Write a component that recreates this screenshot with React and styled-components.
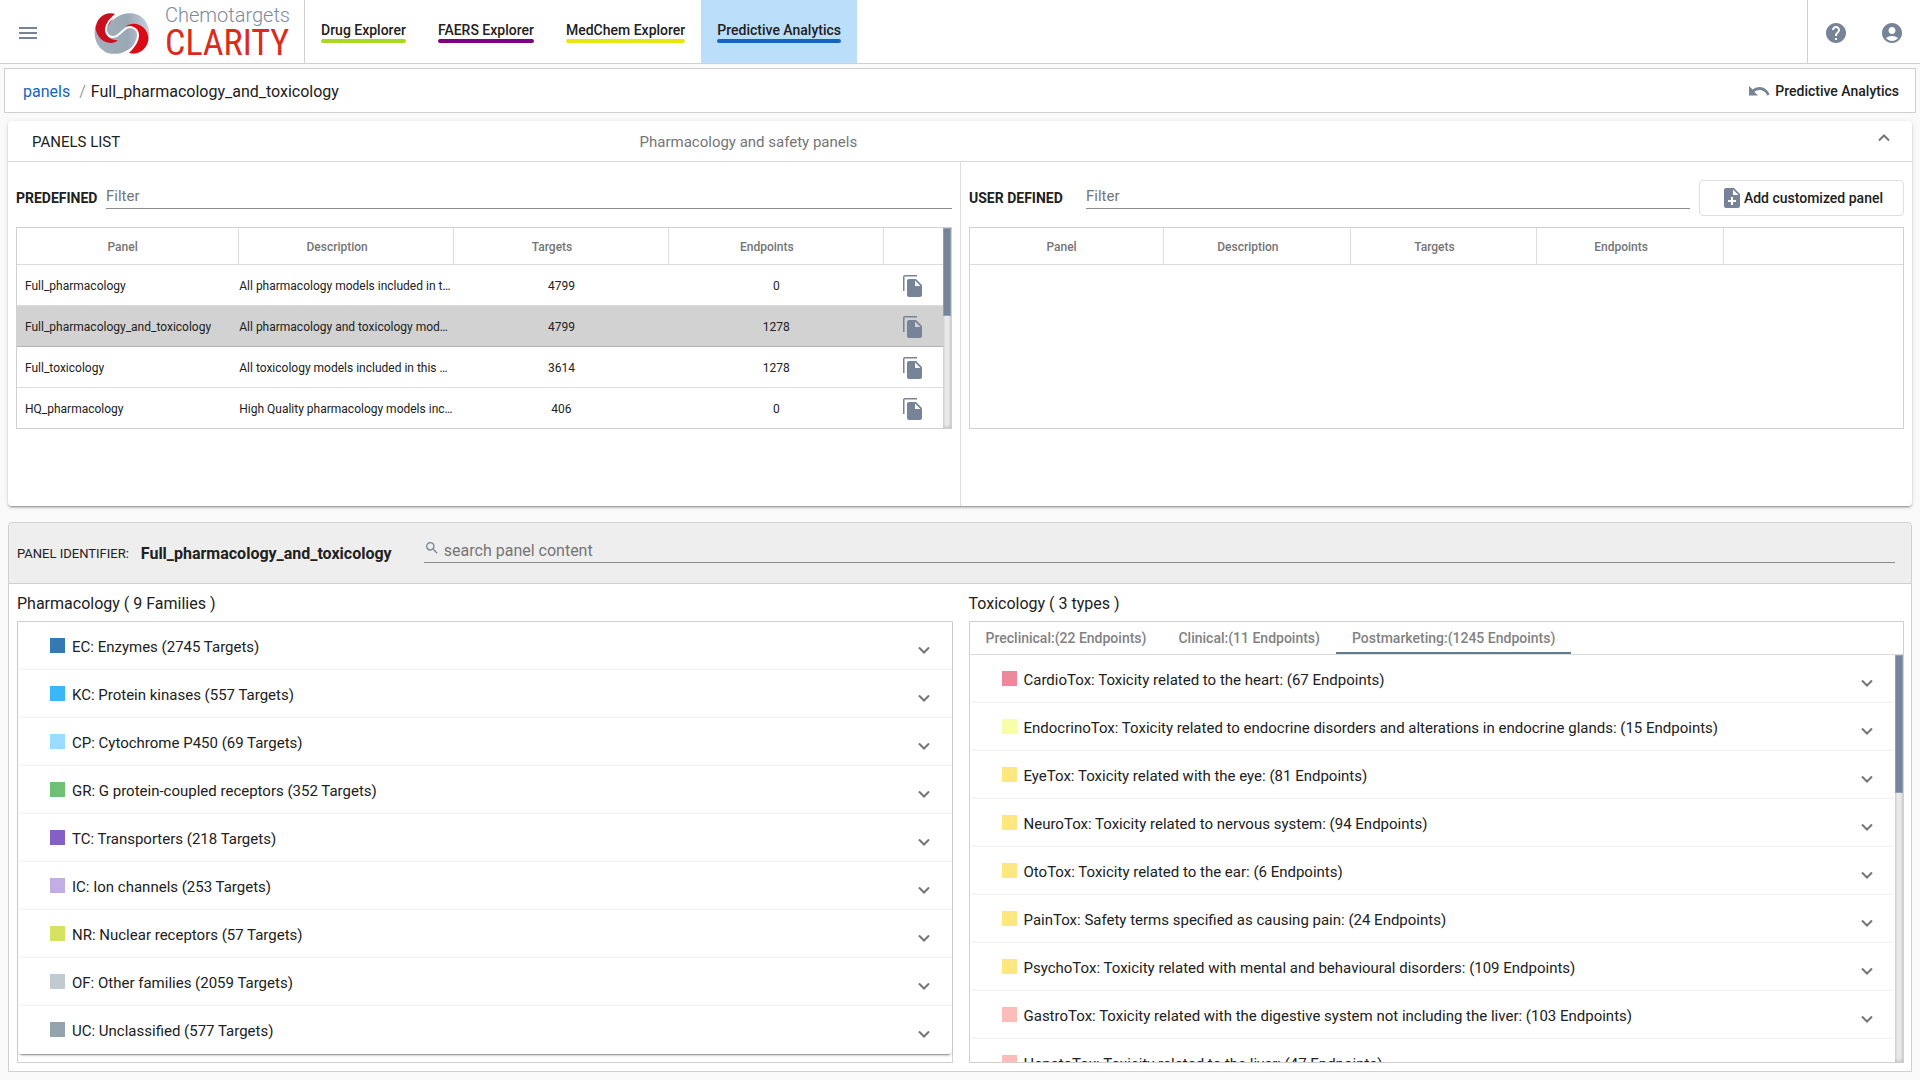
import React, { useState } from 'react';
import styled, { createGlobalStyle, ThemeProvider } from 'styled-components';
import {
  MdAccountCircle,
  MdHelp,
  MdMenu,
  MdNoteAdd,
  MdSearch,
} from 'react-icons/md';

const theme = {
  colors: {
    text: '#212121',
    muted: '#757575',
    icon: '#778396',
    link: '#1565c0',
    border: '#d0d0d0',
    line: '#dcdcdc',
    selected: '#d2d2d2',
    page: '#fafafa',
  },
};

const GlobalStyle = createGlobalStyle`
  *, *::before, *::after {
    box-sizing: border-box;
  }

  body {
    margin: 0;
    background-color: ${theme.colors.page};
    color: ${theme.colors.text};
    font-family: Roboto, 'Liberation Sans', sans-serif;
    font-size: 15px;
  }

  button, input {
    font: inherit;
    color: inherit;
  }
`;

const Page = styled.div`
  display: flex;
  flex-direction: column;
  min-height: 100vh;
`;

const Header = styled.header`
  display: flex;
  height: 64px;
  background-color: white;
  border-bottom: 1px solid ${({ theme: t }) => t.colors.border};
`;

const IconButton = styled.button`
  display: flex;
  padding: 0;
  border: none;
  background: none;
  color: ${({ theme: t }) => t.colors.icon};
  cursor: pointer;
`;

const Brand = styled.div`
  display: flex;
  align-items: center;
  width: 305px;
  padding: 3px 15px 0 16px;
  border-right: 1px solid ${({ theme: t }) => t.colors.border};
`;

const Logo = styled.svg`
  flex: none;
  width: 56px;
  height: 41px;
  margin: 0 15px 0 54px;
`;

const BrandName = styled.div`
  display: flex;
  flex-direction: column;
  color: #7d8a9c;
  font-size: 20px;
  font-weight: 300;
  line-height: 20px;
`;

const Product = styled.span`
  color: #dc2a1b;
  font-family: 'Roboto Condensed', Roboto, sans-serif;
  font-size: 36px;
  font-weight: 400;
  line-height: 36px;
`;

const Nav = styled.nav`
  display: flex;
  flex: 1;
`;

const NavItem = styled.a`
  padding: 21px 16px 0;
  background-color: ${({ $active }) => ($active ? '#bbdefb' : 'transparent')};
  color: ${({ theme: t }) => t.colors.text};
  font-size: 14px;
  font-weight: 500;
  text-decoration: none;

  &::after {
    display: block;
    height: 4px;
    border-radius: 2px;
    background-color: ${({ $color }) => $color};
    content: '';
  }
`;

const NavText = styled.span`
  display: block;
  line-height: 18px;
`;

const HeaderActions = styled.div`
  display: flex;
  align-items: center;
  gap: 32px;
  padding: 3px 16px 0;
  border-left: 1px solid ${({ theme: t }) => t.colors.border};
`;

const Crumbs = styled.div`
  display: flex;
  align-items: center;
  justify-content: space-between;
  height: 45px;
  margin: 4px 4px 8px;
  padding: 1px 16px 0 18px;
  border: 1px solid ${({ theme: t }) => t.colors.border};
  background-color: white;
  font-size: 16px;
`;

const CrumbLink = styled.a`
  color: ${({ theme: t }) => t.colors.link};
  text-decoration: none;
`;

const Slash = styled.span`
  padding: 0 5px 0 9px;
  color: #9e9e9e;
`;

const BackLink = styled.a`
  display: flex;
  align-items: center;
  gap: 5px;
  color: ${({ theme: t }) => t.colors.text};
  font-size: 14px;
  font-weight: 500;
  text-decoration: none;
`;

const Card = styled.section`
  margin: 0 8px;
  border-radius: 4px;
  background-color: white;
  box-shadow: 0 3px 1px -2px rgba(0, 0, 0, 0.2), 0 2px 2px 0 rgba(0, 0, 0, 0.14),
    0 1px 5px 0 rgba(0, 0, 0, 0.12);
`;

const CardHeader = styled.button`
  display: grid;
  grid-template-columns: 32% 1fr auto;
  align-items: center;
  width: 100%;
  height: 41px;
  padding: 2px 22px 0 24px;
  border: none;
  border-bottom: 1px solid ${({ theme: t }) => t.colors.line};
  background: none;
  text-align: left;
  cursor: pointer;

  svg {
    margin-bottom: 8px;
  }
`;

const CardSubtitle = styled.span`
  padding-left: 13px;
  color: ${({ theme: t }) => t.colors.muted};
`;

const Columns = styled.div`
  display: grid;
  grid-template-columns: 1fr 1fr;
`;

const PanelColumn = styled.div`
  padding: 16px 8px 77px;

  & + & {
    border-left: 1px solid ${({ theme: t }) => t.colors.line};
  }
`;

const FilterBar = styled.div`
  display: flex;
  align-items: center;
  height: 40px;
  margin-bottom: 9px;
`;

const FilterLabel = styled.label`
  min-width: ${({ $wide }) => ($wide ? 117 : 90)}px;
  font-size: 14px;
  font-weight: 700;
`;

const FilterInput = styled.input`
  flex: 1;
  min-width: 0;
  height: 27px;
  margin-bottom: 5px;
  padding: 2px 0 0;
  border: none;
  border-bottom: 1px solid #8c8c8c;
  border-radius: 0;
  background: none;
  outline: none;

  &::placeholder {
    color: ${({ theme: t }) => t.colors.muted};
    opacity: 1;
  }
`;

const AddButton = styled.button`
  display: flex;
  align-items: center;
  height: 36px;
  margin-left: 9px;
  padding: 0 20px;
  border: 1px solid #dedede;
  border-radius: 4px;
  background-color: white;
  font-size: 14px;
  font-weight: 500;
  cursor: pointer;

  svg {
    color: ${({ theme: t }) => t.colors.icon};
  }
`;

const TableFrame = styled.div`
  display: flex;
  height: 202px;
  border: 1px solid ${({ theme: t }) => t.colors.border};
  overflow: hidden;
`;

const Table = styled.table`
  flex: 1;
  align-self: flex-start;
  width: 100%;
  border-collapse: separate;
  border-spacing: 0;
  table-layout: fixed;
  font-size: 12px;
`;

const HeadCell = styled.th`
  width: ${({ $width }) => $width};
  height: 37px;
  padding: 2px 18px 0 0;
  border-bottom: 1px solid ${({ theme: t }) => t.colors.line};
  color: ${({ theme: t }) => t.colors.muted};
  font-weight: 500;

  &:first-child {
    padding-left: 8px;
  }

  &:not(:last-child) {
    border-right: 1px solid ${({ theme: t }) => t.colors.line};
  }
`;

const Row = styled.tr`
  background-color: ${({ $selected, theme: t }) => ($selected ? t.colors.selected : 'white')};

  td {
    border-bottom: 1px solid ${({ $selected }) => ($selected ? '#b4b4b4' : '#dcdcdc')};
  }
`;

const Cell = styled.td`
  height: 41px;
  padding: 2px 0 0 ${({ $first }) => ($first ? 8 : 0)}px;
  overflow: hidden;
  text-align: ${({ $center }) => ($center ? 'center' : 'left')};
  text-overflow: ellipsis;
  white-space: nowrap;

  button {
    margin: 0 auto;
  }
`;

const Track = styled.div`
  flex: none;
  width: 8px;
  background-color: #f0f0f0;
  box-shadow: inset 0 0 4px rgba(0, 0, 0, 0.3);
`;

const Thumb = styled.div`
  height: ${({ $size }) => $size};
  border: 1px solid #8f9db5;
  background-color: #778396;
`;

const Content = styled.section`
  display: flex;
  flex: 1;
  flex-direction: column;
  margin: 16px 8px 8px;
  border: 1px solid ${({ theme: t }) => t.colors.border};
  border-radius: 4px 4px 0 0;
  background-color: white;
`;

const ContentHeader = styled.div`
  display: flex;
  align-items: center;
  height: 61px;
  padding: 0 16px 0 8px;
  border-bottom: 1px solid ${({ theme: t }) => t.colors.border};
  border-radius: 4px 4px 0 0;
  background-color: #eee;
  font-size: 13px;
`;

const PanelName = styled.strong`
  flex: none;
  width: 295px;
  padding-left: 12px;
  font-size: 16px;
`;

const SearchField = styled.label`
  display: flex;
  flex: 1;
  align-items: center;
  height: 32px;
  margin-bottom: 12px;
  padding-top: 8px;
  border-bottom: 1px solid #8c8c8c;

  svg {
    align-self: flex-start;
    margin: 1px 4px 0 0;
    color: ${({ theme: t }) => t.colors.icon};
  }
`;

const SearchInput = styled.input`
  flex: 1;
  padding: 0;
  border: none;
  background: none;
  outline: none;
  font-size: 16px;

  &::placeholder {
    color: ${({ theme: t }) => t.colors.muted};
    opacity: 1;
  }
`;

const Groups = styled.div`
  display: grid;
  flex: 1;
  grid-template-columns: 1fr 1fr;
  gap: 16px;
  padding: 0 7px 8px 8px;
`;

const Group = styled.div`
  display: flex;
  flex-direction: column;
  min-width: 0;
`;

const GroupTitle = styled.h2`
  margin: 0;
  padding-top: 2px;
  font-size: 16px;
  font-weight: 400;
  line-height: 35px;
`;

const GroupBox = styled.div`
  flex: 1;
  border: 1px solid ${({ theme: t }) => t.colors.border};
`;

const Tabs = styled.div`
  display: flex;
  height: 33px;
  border-bottom: 1px solid ${({ theme: t }) => t.colors.line};
`;

const Tab = styled.button`
  padding: 2px 16px 0;
  border: none;
  border-bottom: 2px solid ${({ $active }) => ($active ? '#607d8b' : 'transparent')};
  background: none;
  color: #828282;
  font-size: 14px;
  font-weight: 500;
  cursor: pointer;
`;

const ScrollArea = styled.div`
  display: flex;
  height: 407px;
`;

const Accordion = styled.div`
  flex: 1;
  overflow: hidden;
  border-radius: 0 0 4px 4px;
  box-shadow: ${({ $raised }) => ($raised
    ? '0 3px 1px -2px rgba(0, 0, 0, 0.3), 0 2px 2px 0 rgba(0, 0, 0, 0.14)'
    : 'none')};
`;

const AccordionRow = styled.button`
  display: flex;
  align-items: center;
  width: 100%;
  height: 48px;
  padding: 2px 22px 0 32px;
  border: none;
  background-color: white;
  box-shadow: 0 0 3px rgba(0, 0, 0, 0.12);
  text-align: left;
  cursor: pointer;

  svg {
    margin: 5px 0 0 auto;
  }
`;

const Swatch = styled.span`
  width: 15px;
  height: 15px;
  margin: 0 7px 4px 0;
  background-color: ${({ $color }) => $color};
`;

const navItems = [
  { label: 'Drug Explorer', color: '#a8d920' },
  { label: 'FAERS Explorer', color: '#800080' },
  { label: 'MedChem Explorer', color: '#e6e612' },
  { label: 'Predictive Analytics', color: '#1565c0', active: true },
];

const predefined = [
  { name: 'Full_pharmacology', description: 'All pharmacology models included in this', targets: 4799, endpoints: 0 },
  { name: 'Full_pharmacology_and_toxicology', description: 'All pharmacology and toxicology models', targets: 4799, endpoints: 1278 },
  { name: 'Full_toxicology', description: 'All toxicology models included in this panel', targets: 3614, endpoints: 1278 },
  { name: 'HQ_pharmacology', description: 'High Quality pharmacology models included', targets: 406, endpoints: 0 },
];

const families = [
  { label: 'EC: Enzymes (2745 Targets)', color: '#3579b1' },
  { label: 'KC: Protein kinases (557 Targets)', color: '#38b8f6' },
  { label: 'CP: Cytochrome P450 (69 Targets)', color: '#9adcfd' },
  { label: 'GR: G protein-coupled receptors (352 Targets)', color: '#6fc074' },
  { label: 'TC: Transporters (218 Targets)', color: '#8460c4' },
  { label: 'IC: Ion channels (253 Targets)', color: '#c2aee2' },
  { label: 'NR: Nuclear receptors (57 Targets)', color: '#d7e360' },
  { label: 'OF: Other families (2059 Targets)', color: '#c0cad0' },
  { label: 'UC: Unclassified (577 Targets)', color: '#93a4ad' },
];

const tabs = [
  'Preclinical:(22 Endpoints)',
  'Clinical:(11 Endpoints)',
  'Postmarketing:(1245 Endpoints)',
];

const toxicities = [
  { label: 'CardioTox: Toxicity related to the heart: (67 Endpoints)', color: '#ec879c' },
  { label: 'EndocrinoTox: Toxicity related to endocrine disorders and alterations in endocrine glands: (15 Endpoints)', color: '#f8fda9' },
  { label: 'EyeTox: Toxicity related with the eye: (81 Endpoints)', color: '#fee780' },
  { label: 'NeuroTox: Toxicity related to nervous system: (94 Endpoints)', color: '#fee780' },
  { label: 'OtoTox: Toxicity related to the ear: (6 Endpoints)', color: '#fee780' },
  { label: 'PainTox: Safety terms specified as causing pain: (24 Endpoints)', color: '#fee780' },
  { label: 'PsychoTox: Toxicity related with mental and behavioural disorders: (109 Endpoints)', color: '#fee780' },
  { label: 'GastroTox: Toxicity related with the digestive system not including the liver: (103 Endpoints)', color: '#fcbcb8' },
  { label: 'HepatoTox: Toxicity related to the liver: (47 Endpoints)', color: '#fcbcb8' },
];

const Chevron = ({ up }) => (
  <svg width="12" height="8" viewBox="0 0 12 8" fill="none" stroke="#757575" strokeWidth="2" aria-hidden="true">
    <path d={up ? 'M1 6.5L6 1.5L11 6.5' : 'M1 1.5L6 6.5L11 1.5'} />
  </svg>
);

const CopyIcon = () => (
  <svg width="24" height="24" viewBox="0 0 24 24" fill="currentColor" aria-hidden="true">
    <path d="M16 1H4c-1.1 0-2 .9-2 2v14h1.500V2.500H16V1zM15 5l6 6v10c0 1.100-.9 2-2 2H8c-1.100 0-2-.9-2-2V7c0-1.100.9-2 2-2h7zm-1 7h5.500L14 6.500V12z" />
  </svg>
);

const BackArrow = () => (
  <svg width="21" height="10" viewBox="0 0 21 10" fill="#778396" aria-hidden="true">
    <path d="M10.5 1C7.9 1 5.5 2 3.6 3.6L0 0v9.5h9L5.4 5.9C6.8 4.7 8.5 4 10.5 4c3.5 0 6.6 2.3 7.6 5.5l2.4-.8C19.1 4.2 15.2 1 10.5 1z" />
  </svg>
);

const BrandLogo = () => (
  <Logo viewBox="0 0 168 122" aria-hidden="true">
    <defs>
      <linearGradient id="steel" x1="0" y1="0" x2="1" y2="0">
        <stop offset="0" stopColor="#a3b0bb" />
        <stop offset="0.6" stopColor="#9aa8b5" />
        <stop offset="1" stopColor="#c9cfdc" />
      </linearGradient>
    </defs>
    <path
      d="M4 38C-6 80 18 122 60 122C90 122 104 108 122 96L164 84C174 40 150 0 108 0C78 0 64 14 48 28Z"
      fill="url(#steel)"
    />
    <path
      d="M5 48C4 20 30 -8 66 3L38 44C32 66 44 80 72 82C50 100 12 84 5 48Z"
      fill="#c8101e"
    />
    <path
      d="M102 119C138 130 164 102 163 74C160 38 122 20 94 40C122 40 136 56 130 78C126 94 114 106 102 119Z"
      fill="#dc0a17"
    />
    <path
      d="M70 0C50 18 34 32 36 52C39 72 60 78 74 64L92 48C106 36 130 42 132 64C134 86 118 104 98 122"
      fill="none"
      stroke="white"
      strokeWidth="6"
    />
  </Logo>
);

const PanelTable = ({ rows, columns, onSelect, selected }) => (
  <Table>
    <thead>
      <tr>
        <HeadCell $width={columns[0]}>Panel</HeadCell>
        <HeadCell $width={columns[1]}>Description</HeadCell>
        <HeadCell $width={columns[1]}>Targets</HeadCell>
        <HeadCell $width={columns[1]}>Endpoints</HeadCell>
        <HeadCell aria-label="Actions" />
      </tr>
    </thead>
    <tbody>
      {rows.map((row) => (
        <Row key={row.name} $selected={row.name === selected} onClick={() => onSelect(row.name)}>
          <Cell $first>{row.name}</Cell>
          <Cell>{row.description}</Cell>
          <Cell $center>{row.targets}</Cell>
          <Cell $center>{row.endpoints}</Cell>
          <Cell $center>
            <IconButton type="button" aria-label={`Copy ${row.name}`}>
              <CopyIcon />
            </IconButton>
          </Cell>
        </Row>
      ))}
    </tbody>
  </Table>
);

const Families = ({ items, raised }) => (
  <Accordion $raised={raised}>
    {items.map(({ label, color }) => (
      <AccordionRow key={label} type="button" aria-expanded="false">
        <Swatch $color={color} />
        {label}
        <Chevron />
      </AccordionRow>
    ))}
  </Accordion>
);

const App = () => {
  const [selected, setSelected] = useState('Full_pharmacology_and_toxicology');
  const [tab, setTab] = useState(tabs[2]);

  return (
    <ThemeProvider theme={theme}>
      <GlobalStyle />
      <Page>
        <Header>
          <Brand>
            <IconButton type="button" aria-label="Menu">
              <MdMenu size={24} />
            </IconButton>
            <BrandLogo />
            <BrandName>
              <span>Chemotargets</span>
              <Product>CLARITY</Product>
            </BrandName>
          </Brand>
          <Nav>
            {navItems.map(({ label, color, active }) => (
              <NavItem key={label} href="#" $color={color} $active={active}>
                <NavText>{label}</NavText>
              </NavItem>
            ))}
          </Nav>
          <HeaderActions>
            <IconButton type="button" aria-label="Help">
              <MdHelp size={24} />
            </IconButton>
            <IconButton type="button" aria-label="Account">
              <MdAccountCircle size={24} />
            </IconButton>
          </HeaderActions>
        </Header>

        <Crumbs>
          <div>
            <CrumbLink href="#">panels</CrumbLink>
            <Slash>/</Slash>
            {selected}
          </div>
          <BackLink href="#">
            <BackArrow />
            Predictive Analytics
          </BackLink>
        </Crumbs>

        <Card>
          <CardHeader type="button" aria-expanded="true">
            <span>PANELS LIST</span>
            <CardSubtitle>Pharmacology and safety panels</CardSubtitle>
            <Chevron up />
          </CardHeader>
          <Columns>
            <PanelColumn>
              <FilterBar>
                <FilterLabel htmlFor="predefined">PREDEFINED</FilterLabel>
                <FilterInput id="predefined" placeholder="Filter" />
              </FilterBar>
              <TableFrame>
                <PanelTable
                  rows={predefined}
                  columns={['24%', '23.2%']}
                  selected={selected}
                  onSelect={setSelected}
                />
                <Track>
                  <Thumb $size="44%" />
                </Track>
              </TableFrame>
            </PanelColumn>
            <PanelColumn>
              <FilterBar>
                <FilterLabel htmlFor="user-defined" $wide>USER DEFINED</FilterLabel>
                <FilterInput id="user-defined" placeholder="Filter" />
                <AddButton type="button">
                  <MdNoteAdd size={24} />
                  Add customized panel
                </AddButton>
              </FilterBar>
              <TableFrame>
                <PanelTable rows={[]} columns={['20.8%', '20%']} />
              </TableFrame>
            </PanelColumn>
          </Columns>
        </Card>

        <Content>
          <ContentHeader>
            PANEL IDENTIFIER:
            <PanelName>{selected}</PanelName>
            <SearchField>
              <MdSearch size={16} />
              <SearchInput placeholder="search panel content" aria-label="Search panel content" />
            </SearchField>
          </ContentHeader>
          <Groups>
            <Group>
              <GroupTitle>Pharmacology ( 9 Families )</GroupTitle>
              <GroupBox>
                <Families items={families} raised />
              </GroupBox>
            </Group>
            <Group>
              <GroupTitle>Toxicology ( 3 types )</GroupTitle>
              <GroupBox>
                <Tabs role="tablist">
                  {tabs.map((name) => (
                    <Tab
                      key={name}
                      type="button"
                      role="tab"
                      aria-selected={name === tab}
                      $active={name === tab}
                      onClick={() => setTab(name)}
                    >
                      {name}
                    </Tab>
                  ))}
                </Tabs>
                <ScrollArea>
                  <Families items={toxicities} />
                  <Track>
                    <Thumb $size="34%" />
                  </Track>
                </ScrollArea>
              </GroupBox>
            </Group>
          </Groups>
        </Content>
      </Page>
    </ThemeProvider>
  );
};

export default App;
